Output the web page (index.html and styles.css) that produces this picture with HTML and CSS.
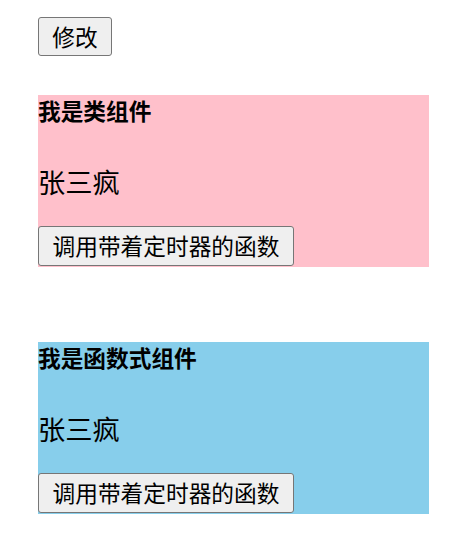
FILE: index.html
```html
<!DOCTYPE html>
<html lang="zh">
<head>
<meta charset="utf-8">
<title>组件</title>
<link rel="stylesheet" href="styles.css">
</head>
<body>
<div class="page">
  <button class="btn btn-edit">修改</button>
  <section class="comp comp-class">
    <div class="comp-title">我是类组件</div>
    <div class="comp-name">张三疯</div>
    <button class="btn btn-call">调用带着定时器的函数</button>
  </section>
  <section class="comp comp-func">
    <div class="comp-title">我是函数式组件</div>
    <div class="comp-name">张三疯</div>
    <button class="btn btn-call">调用带着定时器的函数</button>
  </section>
</div>
</body>
</html>
```
FILE: styles.css
```css
html, body {
  margin: 0;
  padding: 0;
  background: #ffffff;
}
body {
  font-family: "Noto Sans CJK SC", "Noto Sans", sans-serif;
  color: #000;
}
.page {
  display: flex;
  flex-direction: column;
  align-items: flex-start;
  padding: 17px 0 0 38px;
}
.btn {
  font-family: "Noto Sans CJK SC", "Noto Sans", sans-serif;
  font-size: 22.7px;
  color: #000;
  background: #efefef;
  border: 1px solid #767676;
  border-radius: 3px;
  height: 39px;
  line-height: 37px;
  padding: 0;
  margin: 0;
  box-sizing: border-box;
  white-space: nowrap;
  text-align: center;
}
.btn-edit {
  width: 74px;
}
.btn-call {
  width: 256px;
  height: 40px;
  line-height: 38px;
  margin-top: 27px;
}
.comp {
  width: 391px;
  height: 172px;
  display: flex;
  flex-direction: column;
  align-items: flex-start;
  box-sizing: border-box;
}
.comp-class {
  background: #ffc0cb;
  margin-top: 39px;
}
.comp-func {
  background: #87ceeb;
  margin-top: 75px;
}
.comp-title {
  font-size: 22.7px;
  font-weight: bold;
  line-height: 32px;
  height: 34px;
}
.comp-name {
  font-size: 27.3px;
  line-height: 36px;
  margin-top: 34px;
}
```
